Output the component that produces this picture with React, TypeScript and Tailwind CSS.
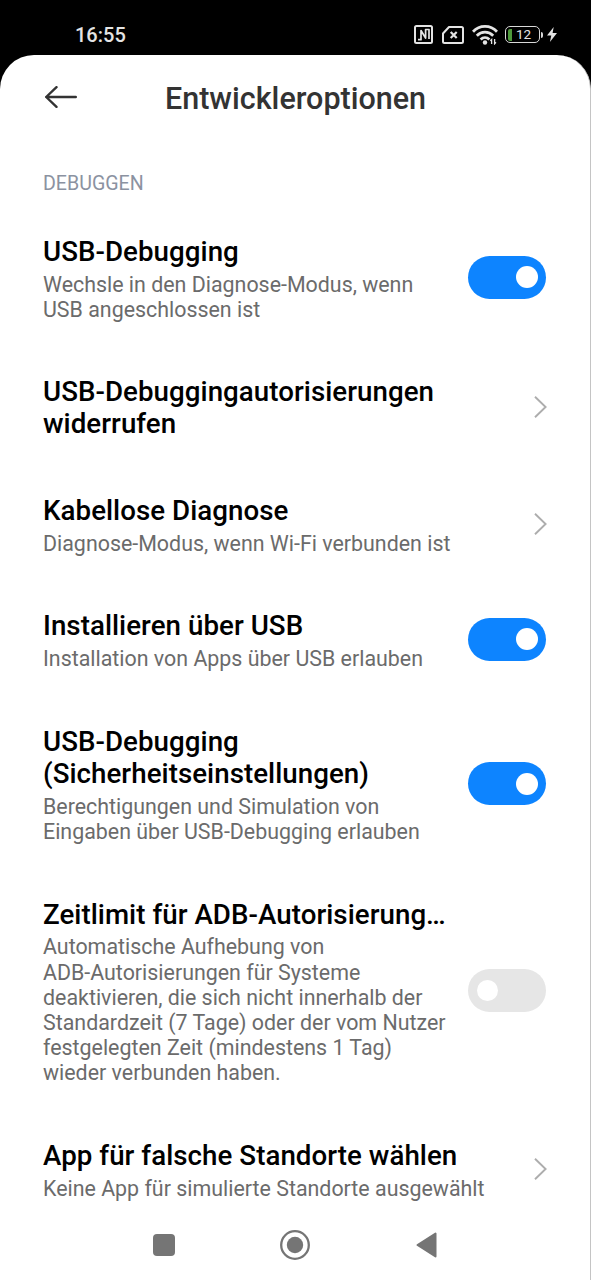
import React from 'react'

type Option = {
  title: string[]
  summary?: string[]
  control: 'on' | 'off' | 'link'
}

const options: Option[] = [
  {
    title: ['USB-Debugging'],
    summary: ['Wechsle in den Diagnose-Modus, wenn', 'USB angeschlossen ist'],
    control: 'on',
  },
  {
    title: ['USB-Debuggingautorisierungen', 'widerrufen'],
    control: 'link',
  },
  {
    title: ['Kabellose Diagnose'],
    summary: ['Diagnose-Modus, wenn Wi-Fi verbunden ist'],
    control: 'link',
  },
  {
    title: ['Installieren über USB'],
    summary: ['Installation von Apps über USB erlauben'],
    control: 'on',
  },
  {
    title: ['USB-Debugging', '(Sicherheitseinstellungen)'],
    summary: ['Berechtigungen und Simulation von', 'Eingaben über USB-Debugging erlauben'],
    control: 'on',
  },
  {
    title: ['Zeitlimit für ADB-Autorisierung…'],
    summary: [
      'Automatische Aufhebung von',
      'ADB-Autorisierungen für Systeme',
      'deaktivieren, die sich nicht innerhalb der',
      'Standardzeit (7 Tage) oder der vom Nutzer',
      'festgelegten Zeit (mindestens 1 Tag)',
      'wieder verbunden haben.',
    ],
    control: 'off',
  },
  {
    title: ['App für falsche Standorte wählen'],
    summary: ['Keine App für simulierte Standorte ausgewählt'],
    control: 'link',
  },
]

const StatusBar: React.FC = () => (
  <div className="flex h-[55px] items-center justify-between pt-[14px] pr-[34px] pl-[75px]">
    <span className="text-[20px] leading-none font-medium text-[#e4e4e4]">16:55</span>

    <div className="flex items-center">
      {/* NFC */}
      <svg className="mr-[9px]" width="19" height="19" viewBox="0 0 19 19" fill="none" stroke="#e4e4e4" strokeWidth="2">
        <rect x="1" y="1" width="17" height="17" rx="1.5" />
        <path d="M4 14.700h3V5.500l4.600 7.500V4.500H15v9.500" strokeWidth="1.700" strokeLinejoin="round" />
      </svg>

      {/* No SIM */}
      <svg className="mr-[8px]" width="22" height="18" viewBox="0 0 22 18" fill="none" stroke="#e4e4e4" strokeWidth="2">
        <path d="M7 1h12.500A1.500 1.500 0 0 1 21 2.500v13a1.500 1.500 0 0 1-1.500 1.500h-17A1.500 1.500 0 0 1 1 15.500V7.500z" strokeLinejoin="round" />
        <path d="M8.700 6l6 6M14.700 6l-6 6" strokeWidth="2.200" />
      </svg>

      {/* Wi-Fi */}
      <svg className="mr-[7px]" width="26" height="20" viewBox="0 0 26 20" fill="none" stroke="#e4e4e4" strokeWidth="2.800">
        <path d="M1 6.700C7.500-.3 18.500-.3 25 6.700" />
        <path d="M4.800 10.700c4.600-4.700 11.800-4.700 16.400 0" />
        <path d="M8.600 14.500c2.600-2.500 6.200-2.500 8.800 0" />
        <circle cx="13" cy="17.500" r="2.200" fill="#e4e4e4" stroke="none" />
        <path d="M19.600 19v-4.500l-1.300 1.300M22.600 14v4.800l1.400-1.400" strokeWidth="1.300" />
      </svg>

      {/* Battery */}
      <div className="flex h-[17px] w-[35px] items-center rounded-[5px] border-[1.5px] border-[#d8d8d8] pl-[2px]">
        <span className="h-[12px] w-[4px] rounded-l-[2px] bg-[#4e9a3c]" />
        <span className="ml-[4px] text-[13.5px] leading-none tracking-[-0.2px] text-[#e4e4e4]">12</span>
      </div>
      <span className="ml-[1px] h-[6px] w-[2px] rounded-r bg-[#d8d8d8]" />
      <svg className="ml-[4px]" width="10" height="15" viewBox="0 0 10 15" fill="#e4e4e4">
        <path d="M6.700 0L0 8.500h4.300L2.900 15 10 6H5.600z" />
      </svg>
    </div>
  </div>
)

const Toggle: React.FC<{ on: boolean }> = ({ on }) => (
  <button
    role="switch"
    aria-checked={on}
    className={`flex h-[43px] w-[78px] items-center rounded-full ${
      on ? 'justify-end bg-[#0d84ff] pr-[8px]' : 'justify-start bg-[#e6e6e6] pl-[9px]'
    }`}
  >
    <span className={on ? 'size-[22px] rounded-full bg-white' : 'size-[21px] rounded-full bg-white'} />
  </button>
)

const Chevron: React.FC = () => (
  <svg width="13" height="22" viewBox="0 0 13 22" fill="none" stroke="#adadad" strokeWidth="1.900">
    <path d="M1 0.700L11.600 11 1 21.300" />
  </svg>
)

const OptionRow: React.FC<{ option: Option }> = ({ option }) => (
  <li className="flex items-center justify-between py-[27.25px]">
    <div className="whitespace-nowrap">
      <h2 className="text-[27.7px] leading-[32px] font-medium tracking-[0.05px] text-black">
        {option.title.map((line) => (
          <span key={line} className="block">{line}</span>
        ))}
      </h2>
      {option.summary && (
        <p className="mt-[3.8px] text-[21.4px] leading-[25.2px] text-[#6b6b6b]">
          {option.summary.map((line) => (
            <span key={line} className="block">{line}</span>
          ))}
        </p>
      )}
    </div>
    <div className="-mt-[3px] flex w-0 justify-end">
      <div className="shrink-0">
        {option.control === 'link' ? (
          <Chevron />
        ) : (
          <div className="pr-[1px]">
            <Toggle on={option.control === 'on'} />
          </div>
        )}
      </div>
    </div>
  </li>
)

const NavBar: React.FC = () => (
  <nav className="flex h-[71px] items-center pl-[153px]">
    <span className="size-[22px] rounded-[4px] bg-[#757575]" />
    <svg className="ml-[105px]" width="30" height="30" viewBox="0 0 30 30">
      <circle cx="15" cy="15" r="13.800" fill="none" stroke="#757575" strokeWidth="2.300" />
      <circle cx="15" cy="15" r="8.200" fill="#757575" />
    </svg>
    <svg className="ml-[106px]" width="21" height="26" viewBox="0 0 21 26">
      <path d="M1.500 13L19.500 1.500v23z" fill="#757575" stroke="#757575" strokeWidth="2" strokeLinejoin="round" />
    </svg>
  </nav>
)

const App: React.FC = () => {
  return (
    <div className="h-[1280px] w-[591px] overflow-hidden bg-black font-[Roboto,sans-serif]">
      <StatusBar />
      <div className="flex h-[1225px] flex-col rounded-t-[34px] border-r border-[#c4c4c4] bg-white">
        <header className="flex h-[86px] items-center pl-[45px]">
          <svg className="-mt-[2px]" width="32" height="22" viewBox="0 0 32 22" fill="none" stroke="#333333" strokeWidth="2.400" strokeLinecap="round" strokeLinejoin="round">
            <path d="M11.500 1.200L1.200 11l10.300 9.800M1.200 11h29.600" />
          </svg>
          <h1 className="mt-[3px] ml-[88px] text-[30.500px] leading-none font-medium text-[#333333]">Entwickleroptionen</h1>
        </header>

        <main className="h-[1068px] px-[43px] pt-[30.500px]">
          <p className="text-[19.600px] leading-[24px] text-[#8b92a1]">DEBUGGEN</p>
          <ul className="mt-[13px]">
            {options.map((option) => (
              <OptionRow key={option.title.join(' ')} option={option} />
            ))}
          </ul>
        </main>

        <NavBar />
      </div>
    </div>
  )
}

export default App
